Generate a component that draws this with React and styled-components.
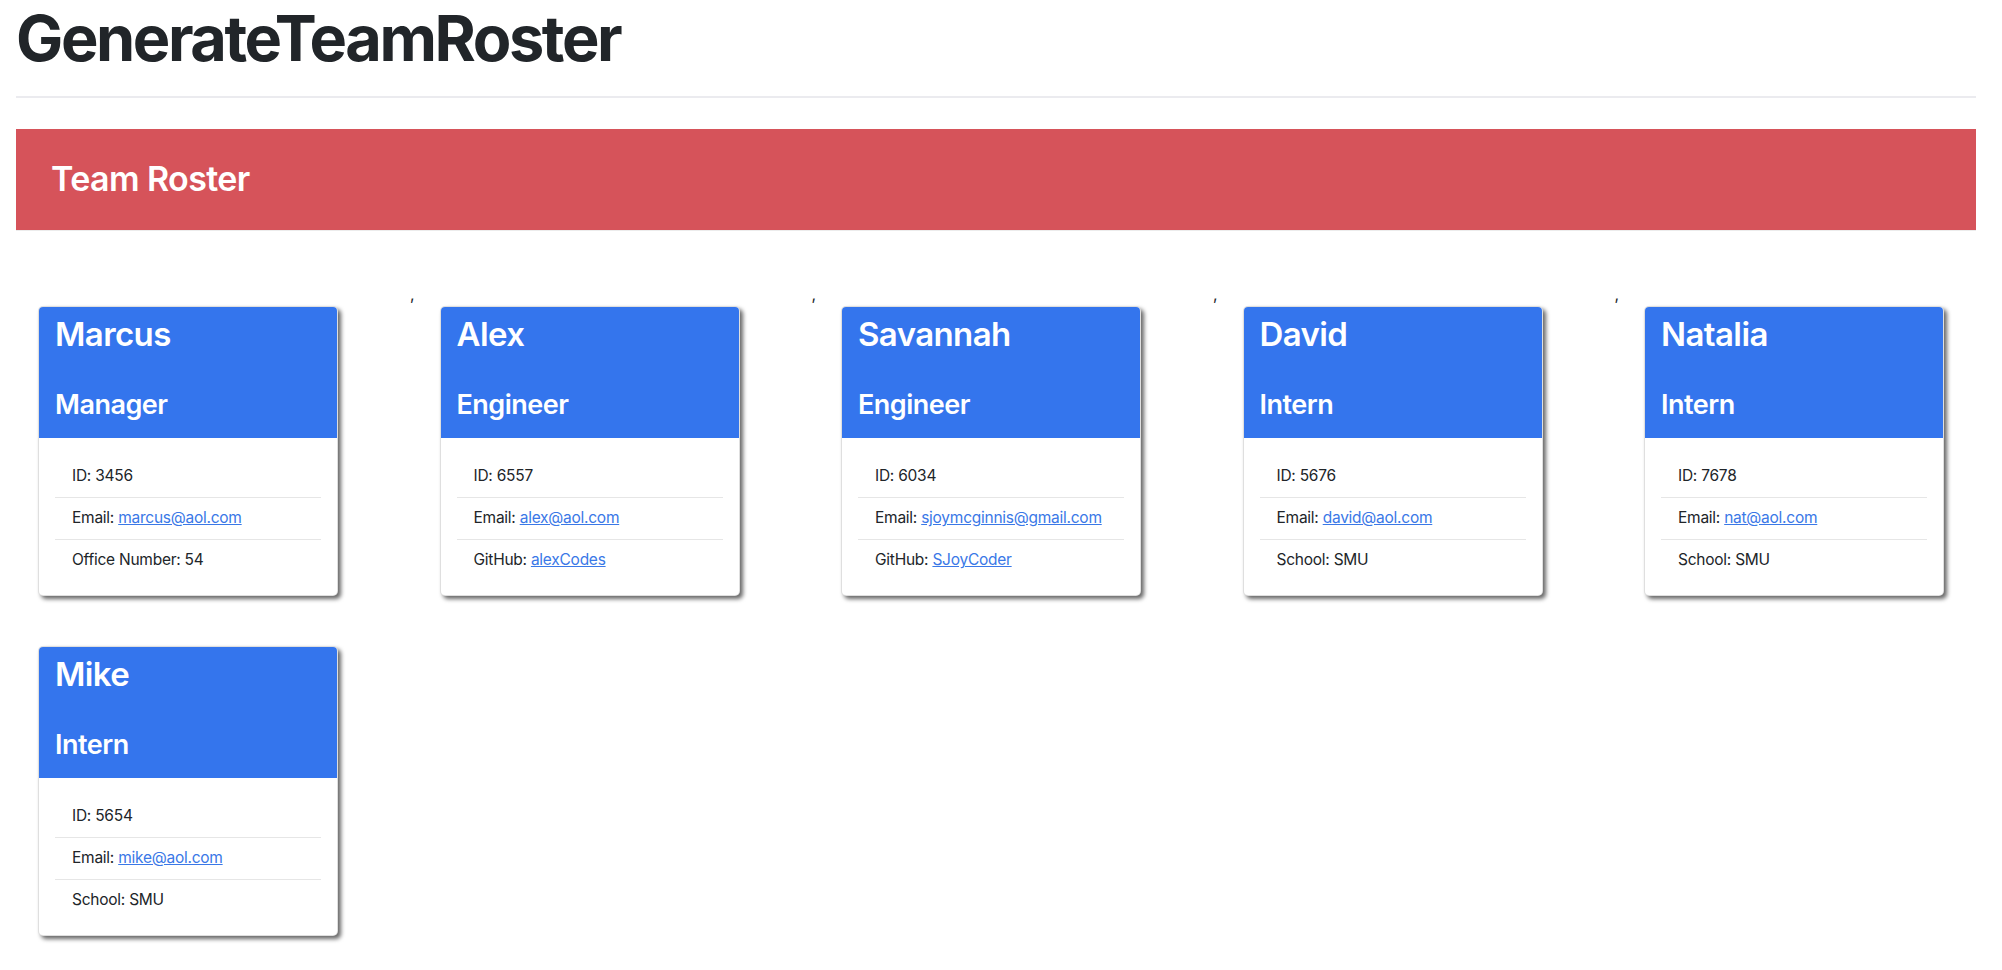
import React from "react";
import styled, { createGlobalStyle } from "styled-components";

const team = [
  { name: "Marcus", role: "Manager", id: 3456, email: "marcus@aol.com", label: "Office Number", value: "54" },
  { name: "Alex", role: "Engineer", id: 6557, email: "alex@aol.com", label: "GitHub", value: "alexCodes", link: true },
  { name: "Savannah", role: "Engineer", id: 6034, email: "sjoymcginnis@gmail.com", label: "GitHub", value: "SJoyCoder", link: true },
  { name: "David", role: "Intern", id: 5676, email: "david@aol.com", label: "School", value: "SMU" },
  { name: "Natalia", role: "Intern", id: 7678, email: "nat@aol.com", label: "School", value: "SMU" },
  { name: "Mike", role: "Intern", id: 5654, email: "mike@aol.com", label: "School", value: "SMU" },
];

const PER_ROW = 5;

const GlobalStyle = createGlobalStyle`
  html, body {
    margin: 0;
    padding: 0;
    background: #ffffff;
    overflow-x: hidden;
  }
  body {
    font-family: Inter, "Liberation Sans", Arial, sans-serif;
    color: #212529;
  }
  * {
    box-sizing: border-box;
  }
`;

const Page = styled.div`
  padding-left: 16px;
  width: 2002px;
`;

const Title = styled.h1`
  margin: 0;
  font-size: 63px;
  line-height: 1.22;
  font-weight: 700;
  letter-spacing: -2.4px;
  color: #212529;
`;

const Rule = styled.div`
  width: 1960px;
  height: 2px;
  margin-top: 19px;
  background: #ebebef;
`;

const Banner = styled.div`
  width: 1960px;
  margin-top: 31px;
  padding: 30px 35px 30px;
  background: #d6535a;
  border-bottom: 1px solid #ececec;

  h2 {
    margin: 0;
    font-size: 34px;
    line-height: 1.2;
    font-weight: 600;
    letter-spacing: -0.6px;
    color: #ffffff;
  }
`;

const Grid = styled.div`
  display: grid;
  grid-template-columns: repeat(4, 401.5px) 323px;
  row-gap: 2px;
  margin-top: 51px;
`;

const Slot = styled.div`
  display: flex;
  align-items: flex-start;
  padding-left: 22px;
`;

const Comma = styled.span`
  padding-left: 72px;
  font-size: 16px;
  line-height: 24px;
  color: #212529;
`;

const Card = styled.div`
  flex: none;
  width: 300px;
  margin: 24px 0;
  border: 1px solid rgba(0, 0, 0, 0.125);
  border-radius: 5px;
  overflow: hidden;
  background: #ffffff;
  box-shadow: 3px 3px 4px rgba(0, 0, 0, 0.6);
`;

const CardHeader = styled.div`
  padding: 8px 16px 16.6px;
  background: #3475ed;
  color: #ffffff;
`;

const Name = styled.h2`
  margin: 0;
  font-size: 33px;
  line-height: 1.2;
  font-weight: 600;
  letter-spacing: -0.6px;
`;

const Role = styled.h3`
  margin: 34.4px 0 0;
  font-size: 27px;
  line-height: 1.2;
  font-weight: 600;
  letter-spacing: -0.5px;
`;

const CardBody = styled.ul`
  margin: 0;
  padding: 18px 16px 14px;
  list-style: none;
`;

const Item = styled.li`
  padding: 8.5px 16px 8.5px 17px;
  font-size: 15.5px;
  line-height: 24px;
  letter-spacing: -0.25px;
  white-space: nowrap;
  color: #212529;

  & + & {
    border-top: 1px solid #e6e6e6;
  }

  a {
    color: #3a78e7;
    text-decoration: underline;
  }
`;

function MemberCard({ member }) {
  return (
    <Card>
      <CardHeader>
        <Name>{member.name}</Name>
        <Role>{member.role}</Role>
      </CardHeader>
      <CardBody>
        <Item>ID: {member.id}</Item>
        <Item>
          Email: <a href={`mailto:${member.email}`}>{member.email}</a>
        </Item>
        <Item>
          {member.label}:{" "}
          {member.link ? <a href={`https://github.com/${member.value}`}>{member.value}</a> : member.value}
        </Item>
      </CardBody>
    </Card>
  );
}

export default function App() {
  return (
    <>
      <GlobalStyle />
      <Page>
        <Title>GenerateTeamRoster</Title>
        <Rule />
        <Banner>
          <h2>Team Roster</h2>
        </Banner>
        <Grid>
          {team.map((member, i) => {
            const showComma = i < team.length - 1 && (i + 1) % PER_ROW !== 0;
            return (
              <Slot key={member.name}>
                <MemberCard member={member} />
                {showComma && <Comma>,</Comma>}
              </Slot>
            );
          })}
        </Grid>
      </Page>
    </>
  );
}
